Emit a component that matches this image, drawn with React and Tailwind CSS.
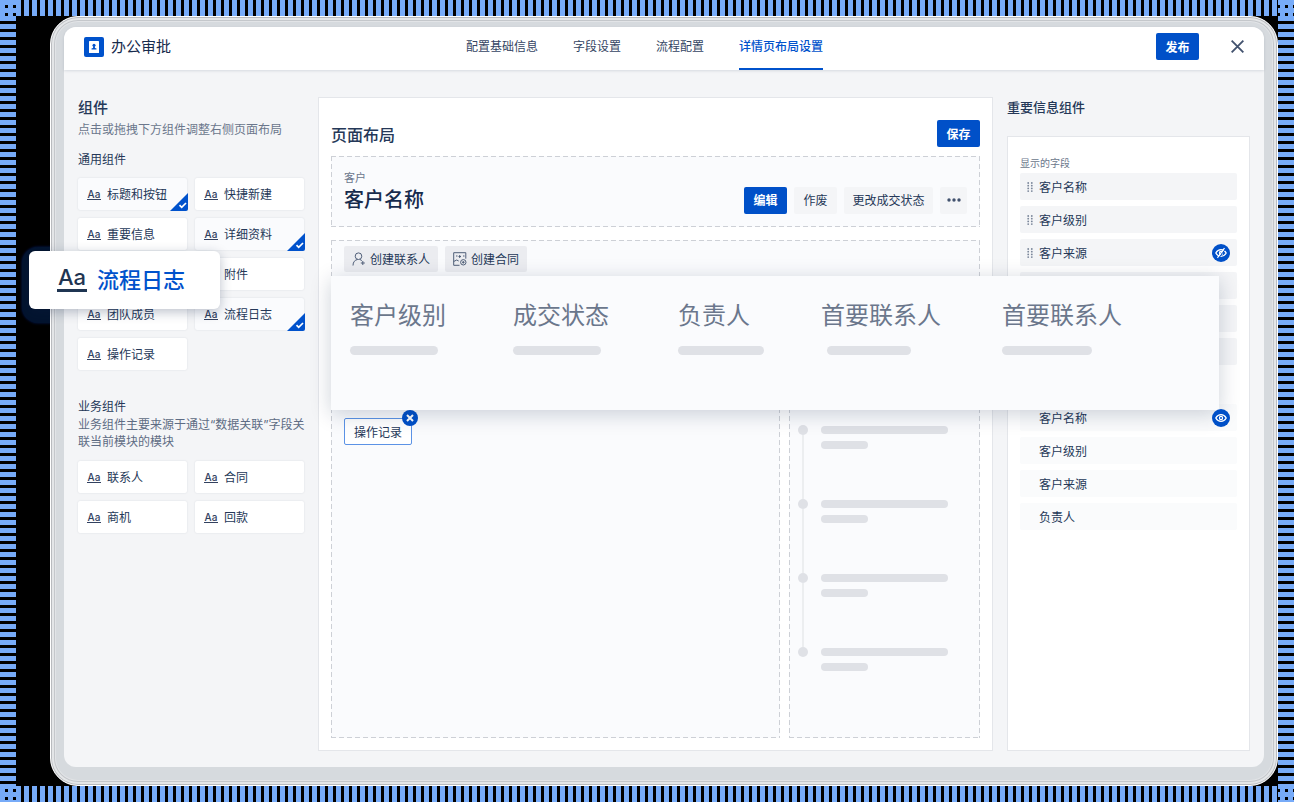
import React from 'react';
import clsx from 'clsx';

const navItems = ['配置基础信息', '字段设置', '流程配置', '详情页布局设置'];

const commonWidgets = [
  { name: '标题和按钮', used: true },
  { name: '快捷新建' },
  { name: '重要信息' },
  { name: '详细资料', used: true },
  { name: '' },
  { name: '附件' },
  { name: '团队成员' },
  { name: '流程日志', used: true },
  { name: '操作记录' },
];

const businessWidgets = [
  { name: '联系人' },
  { name: '合同' },
  { name: '商机' },
  { name: '回款' },
];

const summaryFields = [
  { name: '客户级别', cell: 'w-[163px]', bar: 'w-[88px]' },
  { name: '成交状态', cell: 'w-[165px]', bar: 'w-[88px]' },
  { name: '负责人', cell: 'w-[143px]', bar: 'w-[86px]' },
  { name: '首要联系人', cell: 'w-[181px]', bar: 'ml-1.5 w-[84px]' },
  { name: '首要联系人', cell: 'w-[181px]', bar: 'w-[90px]' },
];

const primaryButton = 'h-[27px] w-[43px] rounded-xs bg-[#0050c8] text-xs font-bold text-white';
const toolButton = 'h-[27px] rounded-xs bg-[#f4f5f7] text-xs text-[#253858]';
const quickButton =
  'flex h-[26px] items-center gap-1 rounded-xs bg-[#ebecf0] px-2 text-xs text-[#253858]';

// drop zone outline: 5px dashes with 3px gaps, wider than the browser's own dashed border
const dropZone =
  'border border-transparent bg-[#fafbfd] bg-origin-border bg-[linear-gradient(90deg,#cdd0d6_5px,transparent_5px),linear-gradient(90deg,#cdd0d6_5px,transparent_5px),linear-gradient(#cdd0d6_5px,transparent_5px),linear-gradient(#cdd0d6_5px,transparent_5px)] bg-[length:8px_1px,8px_1px,1px_8px,1px_8px] bg-[position:0_0,0_100%,0_0,100%_0] [background-repeat:repeat-x,repeat-x,repeat-y,repeat-y]';

const Aa = ({ large }) => (
  <span
    className={clsx(
      'shrink-0 text-center font-["Inter",sans-serif] font-medium',
      large
        ? 'mb-1 w-[30px] border-b-[3px] border-[#1f3552] text-[22px] leading-6 text-[#1f3552]'
        : 'w-3.5 border-b border-[#33415f] text-[10px] leading-[10px] text-[#33415f]'
    )}
  >
    Aa
  </span>
);

const WidgetCard = ({ name, used }) => (
  <button
    className={clsx(
      'relative flex h-8 items-center gap-1.5 rounded-xs pl-[9px] text-xs text-[#253858] shadow-[0_0_2px_rgba(9,30,66,0.12)]',
      used ? 'bg-[#fafbfd]' : 'bg-white'
    )}
  >
    {name && <Aa />}
    {name}
    {used && (
      <svg className="absolute -right-px -bottom-px h-[18px] w-[18px]" viewBox="0 0 18 18">
        <path d="M18 0v16a2 2 0 0 1-2 2H0z" fill="#0052cc" />
        <path d="M9.5 12.2l2.2 2.2 4.3-4.400" fill="none" stroke="#fff" strokeWidth="1.7" />
      </svg>
    )}
  </button>
);

const EyeBadge = ({ off }) => (
  <span className="relative z-20 mr-[7px] ml-auto flex h-[18px] w-[18px] items-center justify-center rounded-full bg-[#0050c8]">
    <svg className="h-3 w-3" viewBox="0 0 12 12" fill="none" stroke="#fff">
      <path d="M.8 6C2 3.8 3.8 2.6 6 2.6S10 3.8 11.2 6C10 8.2 8.2 9.4 6 9.4S2 8.2 .8 6z" strokeWidth="1.3" />
      <circle cx="6" cy="6" r="1.6" strokeWidth="1.2" />
      {off && <path d="M2.5 10.8L9.5 1.2" strokeWidth="1.3" />}
      {off && <path d="M3.7 11.2L10.5 1.9" stroke="#0050c8" />}
    </svg>
  </span>
);

const FieldRow = ({ name, muted, grip = true, children }) => (
  <li
    className={clsx(
      'flex h-[27px] items-center rounded-xs text-xs text-[#253858]',
      muted ? 'bg-[#fafbfc]' : 'bg-[#f4f5f7]'
    )}
  >
    <svg className="ml-[7px] h-2.5 w-1.5" viewBox="0 0 6 10">
      {grip &&
        [1, 3.7, 6.4, 9.1].map((y) => (
          <g key={y} fill="#7a869a">
            <circle cx="1.2" cy={y} r=".9" />
            <circle cx="4.8" cy={y} r=".9" />
          </g>
        ))}
    </svg>
    <span className="ml-1.5">{name}</span>
    {children}
  </li>
);

const Header = () => (
  <header className="relative flex h-[43px] shrink-0 items-center rounded-t-xl bg-white pl-5 shadow-[0_1px_3px_rgba(9,30,66,0.12)]">
    <div className="flex w-[382px] items-center gap-[7px] pb-1">
      <svg className="h-5 w-5" viewBox="0 0 20 20">
        <rect width="20" height="20" rx="2" fill="#0052cc" />
        <rect x="5" y="4" width="10" height="12" rx=".6" fill="#fff" />
        <circle cx="10" cy="8.2" r="1.5" fill="#0052cc" />
        <path d="M9.3 9h1.400l.3 2 1.5.6v1h-5v-1l1.5-.6z" fill="#0052cc" />
      </svg>
      <h1 className="text-[15px] text-[#172b4d]">办公审批</h1>
    </div>
    <nav className="flex h-full gap-[35px] text-xs">
      {navItems.map((item, i) => (
        <a
          key={item}
          href="#"
          className={clsx(
            'flex items-center border-b-2 pb-[3px]',
            i === 3
              ? 'border-[#0052cc] font-medium text-[#0052cc]'
              : 'border-transparent text-[#344563]'
          )}
        >
          {item}
        </a>
      ))}
    </nav>
    <div className="ml-auto flex items-center gap-8 pr-5 pb-1">
      <button className={primaryButton}>发布</button>
      <button aria-label="close">
        <svg className="h-[13px] w-[13px]" viewBox="0 0 12 12">
          <path d="M.6.6l10.8 10.8M11.4.6L.6 11.4" stroke="#42526e" strokeWidth="1.7" />
        </svg>
      </button>
    </div>
  </header>
);

const WidgetPanel = () => (
  <aside className="relative w-[226px] shrink-0">
    <h2 className="text-[15px] leading-5 font-medium text-[#253858]">组件</h2>
    <p className="mt-1 text-xs leading-4 whitespace-nowrap text-[#6b778c]">
      点击或拖拽下方组件调整右侧页面布局
    </p>
    <h3 className="mt-3.5 text-xs leading-4 text-[#253858]">通用组件</h3>
    <div className="mt-[11px] grid grid-cols-2 gap-2">
      {commonWidgets.map((w, i) => (
        <WidgetCard key={i} {...w} />
      ))}
    </div>
    <h3 className="mt-7 text-xs leading-4 text-[#253858]">业务组件</h3>
    <p className="mt-0.5 font-['Inter','Noto_Sans_CJK_SC',sans-serif] text-xs leading-[17px] whitespace-nowrap text-[#5e6c84]">
      业务组件主要来源于通过“数据关联”字段关
      <br />
      联当前模块的模块
    </p>
    <div className="mt-[11px] grid grid-cols-2 gap-2">
      {businessWidgets.map((w) => (
        <WidgetCard key={w.name} {...w} />
      ))}
    </div>

    {/* widget being dragged */}
    <div className="absolute top-[154px] -left-[49px] z-30 flex h-[58px] w-[191px] items-center gap-2.5 rounded-md bg-white pl-7 shadow-[0_3px_12px_rgba(9,30,66,0.28)]">
      <Aa large />
      <span className="pb-1 text-[22px] font-medium text-[#0052cc]">流程日志</span>
    </div>
  </aside>
);

const TimelineItem = ({ last }) => (
  <li className="relative flex h-[74px] gap-[13px]">
    {!last && <span className="absolute top-2.5 left-1 h-16 w-0.5 bg-[#eceef0]" />}
    <span className="h-2.5 w-2.5 rounded-full bg-[#dfe1e6]" />
    <div className="mt-px flex flex-col gap-[7px]">
      <span className="h-2 w-[127px] rounded-full bg-[#dfe1e6]" />
      <span className="h-2 w-[47px] rounded-full bg-[#dfe1e6]" />
    </div>
  </li>
);

const SummaryOverlay = () => (
  <div className="absolute top-[178px] -right-[227px] left-3 z-10 flex h-[134px] bg-[#fafbfd] pt-5 pl-[19px] shadow-[0_4px_20px_rgba(9,30,66,0.2)]">
    {summaryFields.map((f, i) => (
      <div key={i} className={clsx('shrink-0', f.cell)}>
        <div className="text-2xl leading-9 text-[#6b778c]">{f.name}</div>
        <div className={clsx('mt-3.5 h-[9px] rounded-full bg-[#dfe1e6]', f.bar)} />
      </div>
    ))}
  </div>
);

const LayoutCanvas = () => (
  <main className="relative flex min-w-0 flex-1 flex-col border border-[#e4e6ea] bg-white px-3 pt-[22px] pb-3">
    <div className="flex items-center justify-between">
      <h2 className="text-base font-medium text-[#253858]">页面布局</h2>
      <button className={primaryButton}>保存</button>
    </div>

    <section className={clsx(dropZone, 'mt-[9px] flex h-[71px] shrink-0 justify-between px-3')}>
      <div className="pt-3">
        <div className="text-[11px] leading-4 text-[#6b778c]">客户</div>
        <div className="text-xl leading-7 font-medium text-[#172b4d]">客户名称</div>
      </div>
      <div className="flex items-center gap-[7px] pt-[17px]">
        <button className={primaryButton}>编辑</button>
        <button className={clsx(toolButton, 'w-[43px]')}>作废</button>
        <button className={clsx(toolButton, 'w-[89px]')}>更改成交状态</button>
        <button className={clsx(toolButton, 'flex w-[27px] items-center justify-center')} aria-label="more">
          <svg className="h-1 w-3.5" viewBox="0 0 14 4" fill="#42526e">
            <circle cx="2" cy="2" r="1.7" />
            <circle cx="7" cy="2" r="1.7" />
            <circle cx="12" cy="2" r="1.7" />
          </svg>
        </button>
      </div>
    </section>

    <section className={clsx(dropZone, 'mt-[13px] flex h-[150px] shrink-0 items-start gap-[7px] px-3 pt-[5px]')}>
      <button className={quickButton}>
        <svg className="h-3.5 w-3.5" viewBox="0 0 14 14" fill="none" stroke="#505f79">
          <circle cx="6.5" cy="4.2" r="3.3" />
          <path d="M1 13.5c0-3.6 2-5.6 4.6-6M7.8 7.400l2 1.2M10.800 9v4M8.800 11h4" />
        </svg>
        创建联系人
      </button>
      <button className={quickButton}>
        <svg className="h-3.5 w-3.5" viewBox="0 0 14 14" fill="none" stroke="#505f79">
          <path d="M6.5 13.3H.7V.7h12.1v6M.7 9.5l3-1.5 2 1M3 4h1.500M6.700 3v3M5.500 4.500h2.500M10 4h1.500" />
          <circle cx="10.3" cy="10.3" r="2.7" />
          <path d="M9 10.3h2.6M10.3 9v2.6" />
        </svg>
        创建合同
      </button>
    </section>

    <div className="mt-2.5 flex flex-1 gap-[9px]">
      <section className={clsx(dropZone, 'flex-1 pt-[17px] pl-3')}>
        <div className="relative flex h-[27px] w-[68px] items-center justify-center rounded-xs border border-[#5c93e6] bg-white text-xs text-[#253858]">
          操作记录
          <button
            className="absolute -top-[9px] -right-[7px] flex h-4 w-4 items-center justify-center rounded-full bg-[#0050c8]"
            aria-label="remove"
          >
            <svg className="h-2 w-2" viewBox="0 0 8 8">
              <path d="M1 1l6 6M7 1L1 7" stroke="#fff" strokeWidth="2" />
            </svg>
          </button>
        </div>
      </section>
      <section className={clsx(dropZone, 'w-[191px] pt-6 pl-2')}>
        <ul>
          <TimelineItem />
          <TimelineItem />
          <TimelineItem />
          <TimelineItem last />
        </ul>
      </section>
    </div>

    <SummaryOverlay />
  </main>
);

const FieldPanel = () => (
  <aside className="flex w-[243px] shrink-0 flex-col">
    <h2 className="text-[13px] leading-5 font-medium text-[#253858]">重要信息组件</h2>
    <div className="mt-[19px] flex-1 border border-[#e4e6ea] bg-white px-3 pt-[18px]">
      <div className="text-[10px] leading-4 text-[#6b778c]">显示的字段</div>
      <ul className="mt-0.5 flex flex-col gap-1.5">
        <FieldRow name="客户名称" />
        <FieldRow name="客户级别" />
        <FieldRow name="客户来源">
          <EyeBadge off />
        </FieldRow>
        <FieldRow grip={false} />
        <FieldRow grip={false} />
        <FieldRow grip={false} />
      </ul>
      <ul className="mt-[39px] flex flex-col gap-1.5">
        <FieldRow name="客户名称" muted grip={false}>
          <EyeBadge />
        </FieldRow>
        <FieldRow name="客户级别" muted grip={false} />
        <FieldRow name="客户来源" muted grip={false} />
        <FieldRow name="负责人" muted grip={false} />
      </ul>
    </div>
  </aside>
);

const sideStripes = 'w-4 shrink-0 bg-[linear-gradient(#77abf8_5px,#000_5px)] bg-[length:8px_8px]';
const cornerDots = 'w-4 bg-[linear-gradient(#77abf8_5px,transparent_5px)] bg-[length:8px_8px]';

const App = () => (
  <div className="flex min-h-screen flex-col bg-[linear-gradient(90deg,#77abf8_5px,#000_5px)] bg-[length:8px_8px] font-['Noto_Sans_CJK_SC',sans-serif]">
    <div className="flex h-4 shrink-0 justify-between">
      <div className={cornerDots} />
      <div className={cornerDots} />
    </div>

    <div className="flex flex-1">
      <div className={sideStripes} />
      <div className="relative flex min-w-0 flex-1 bg-black pl-[34px]">
        {/* glow of the dragged widget outside of the device */}
        <div className="absolute top-[231px] left-1.5 h-[76px] w-16 rounded-2xl bg-[#03142f] shadow-[0_0_3px_#061d5c]" />
        {/* device frame */}
        <div className="relative flex min-w-0 flex-1 rounded-[28px] border border-white bg-[#d6dade] px-[13px] pt-2.5 pb-[18px] shadow-[inset_0_0_0_1px_#b9bbbf,inset_0_0_0_3px_#e4e6e8,inset_0_0_0_4px_#c4c7cb,inset_0_0_0_5px_#e2e4e7]">
          <div className="flex min-w-0 flex-1 flex-col rounded-xl bg-[#f4f5f7]">
            <Header />
            <div className="flex flex-1 gap-3.5 px-3.5 pt-[27px] pb-4">
              <WidgetPanel />
              <LayoutCanvas />
              <FieldPanel />
            </div>
          </div>
        </div>
      </div>
      <div className={sideStripes} />
    </div>

    <div className="flex h-4 shrink-0 justify-between">
      <div className={clsx(cornerDots, 'bg-[position:0_-2px]')} />
      <div className={clsx(cornerDots, 'bg-[position:0_-2px]')} />
    </div>
  </div>
);

export default App;
